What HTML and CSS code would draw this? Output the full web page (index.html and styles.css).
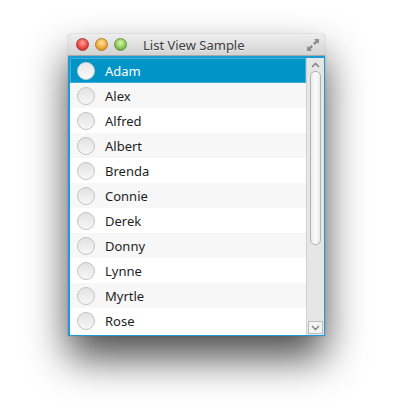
FILE: index.html
```html
<!DOCTYPE html>
<html lang="en">
<head>
  <meta charset="UTF-8">
  <meta name="viewport" content="width=device-width, initial-scale=1.0">
  <title>List View Sample</title>
  <link rel="stylesheet" href="styles.css">
</head>
<body>
  <div class="stage">
    <div class="window">
      <div class="titlebar">
        <div class="lights">
          <span class="light red"></span>
          <span class="light yellow"></span>
          <span class="light green"></span>
        </div>
        <div class="title">List View Sample</div>
        <svg class="resize" width="16" height="16" viewBox="0 0 16 16">
          <path d="M9 2h5v5l-1.6-1.6-2.6 2.6-1.8-1.8 2.6-2.6z" fill="#8d8d8d"/>
          <path d="M7 14H2V9l1.6 1.6 2.6-2.6 1.8 1.8-2.6 2.6z" fill="#8d8d8d"/>
        </svg>
      </div>

      <div class="list">
        <ul class="items">
          <li class="item selected"><span class="radio"></span>Adam</li>
          <li class="item"><span class="radio"></span>Alex</li>
          <li class="item"><span class="radio"></span>Alfred</li>
          <li class="item"><span class="radio"></span>Albert</li>
          <li class="item"><span class="radio"></span>Brenda</li>
          <li class="item"><span class="radio"></span>Connie</li>
          <li class="item"><span class="radio"></span>Derek</li>
          <li class="item"><span class="radio"></span>Donny</li>
          <li class="item"><span class="radio"></span>Lynne</li>
          <li class="item"><span class="radio"></span>Myrtle</li>
          <li class="item"><span class="radio"></span>Rose</li>
        </ul>
        <div class="scrollbar">
          <div class="arrow up">
            <svg width="9" height="6" viewBox="0 0 9 6"><path d="M1 5l3.5-3.5L8 5" fill="none" stroke="#7a7a7a" stroke-width="1.3"/></svg>
          </div>
          <div class="track">
            <div class="thumb"></div>
          </div>
          <div class="arrow down">
            <svg width="9" height="6" viewBox="0 0 9 6"><path d="M1 1l3.5 3.5L8 1" fill="none" stroke="#7a7a7a" stroke-width="1.3"/></svg>
          </div>
        </div>
      </div>
    </div>
  </div>
</body>
</html>
```

FILE: styles.css
```css
body {
  margin: 0;
  background-color: #ffffff;
  font-family: "Noto Sans", "DejaVu Sans", sans-serif;
}

.stage {
  height: 409px;
  padding: 34px 0 0 68px;
  box-sizing: border-box;
}

.window {
  width: 257px;
  height: 302px;
  display: flex;
  flex-direction: column;
  border-radius: 4px 4px 0 0;
  box-shadow: 0 22px 40px rgba(0, 0, 0, 0.7), 0 0 1px rgba(0, 0, 0, 0.5);
  background-color: #dcdcdc;
}

.titlebar {
  height: 21px;
  display: flex;
  align-items: center;
  padding: 0 4px 0 8px;
  border-radius: 4px 4px 0 0;
  background: linear-gradient(#eeeeee, #d3d3d3);
  border-bottom: 1px solid #a8a8a8;
}

.lights {
  display: flex;
  gap: 6px;
}

.light {
  width: 13px;
  height: 13px;
  border-radius: 50%;
  box-sizing: border-box;
}

.red {
  background: radial-gradient(circle at 50% 35%, #ffa3a0 0, #ec4a40 55%, #b8241f 100%);
  border: 1px solid #a83b36;
}

.yellow {
  background: radial-gradient(circle at 50% 35%, #ffe4a6 0, #f1ab38 55%, #bb7b18 100%);
  border: 1px solid #b07c2c;
}

.green {
  background: radial-gradient(circle at 50% 35%, #dcf8ae 0, #8bc95a 55%, #5a9230 100%);
  border: 1px solid #6a9542;
}

.title {
  flex: 1;
  padding-left: 16px;
  font-size: 13px;
  color: #3c3c3c;
  text-shadow: 0 1px 0 rgba(255, 255, 255, 0.6);
}

.resize {
  display: block;
}

.list {
  flex: 1;
  display: flex;
  border: 2px solid #1a9bd3;
  border-right-width: 1px;
  border-bottom-width: 1px;
  background-color: #ffffff;
  overflow: hidden;
}

.items {
  flex: 1;
  margin: 0;
  padding: 0;
  list-style: none;
  overflow: hidden;
}

.item {
  height: 25px;
  display: flex;
  align-items: center;
  padding-left: 7px;
  font-size: 13px;
  color: #1e1e1e;
}

.item:nth-child(even) {
  background-color: #f7f7f7;
}

.item.selected {
  background-color: #0094c7;
  color: #ffffff;
  box-shadow: inset 0 0 0 1px #3fb0dc;
}

.radio {
  width: 18px;
  height: 18px;
  box-sizing: border-box;
  border-radius: 50%;
  margin-right: 10px;
  border: 1px solid #c3c3c3;
  background: linear-gradient(#e2e2e2, #f7f7f7);
}

.selected .radio {
  border-color: #d0d0d0;
  background: linear-gradient(#e8e8e8, #fafafa);
}

.scrollbar {
  width: 17px;
  display: flex;
  flex-direction: column;
  background-color: #e6e6e6;
  border-left: 1px solid #d2d2d2;
}

.arrow {
  height: 13px;
  display: flex;
  align-items: center;
  justify-content: center;
}

.arrow.down {
  border: 1px solid #bcbcbc;
  background-color: #f3f3f3;
  height: 11px;
  margin: 0 1px 1px 1px;
}

.track {
  flex: 1;
  padding: 0 3px;
}

.thumb {
  height: 172px;
  border: 1px solid #b3b3b3;
  border-radius: 5px;
  background: linear-gradient(90deg, #e9e9e9, #fbfbfb 50%, #e9e9e9);
}
```
